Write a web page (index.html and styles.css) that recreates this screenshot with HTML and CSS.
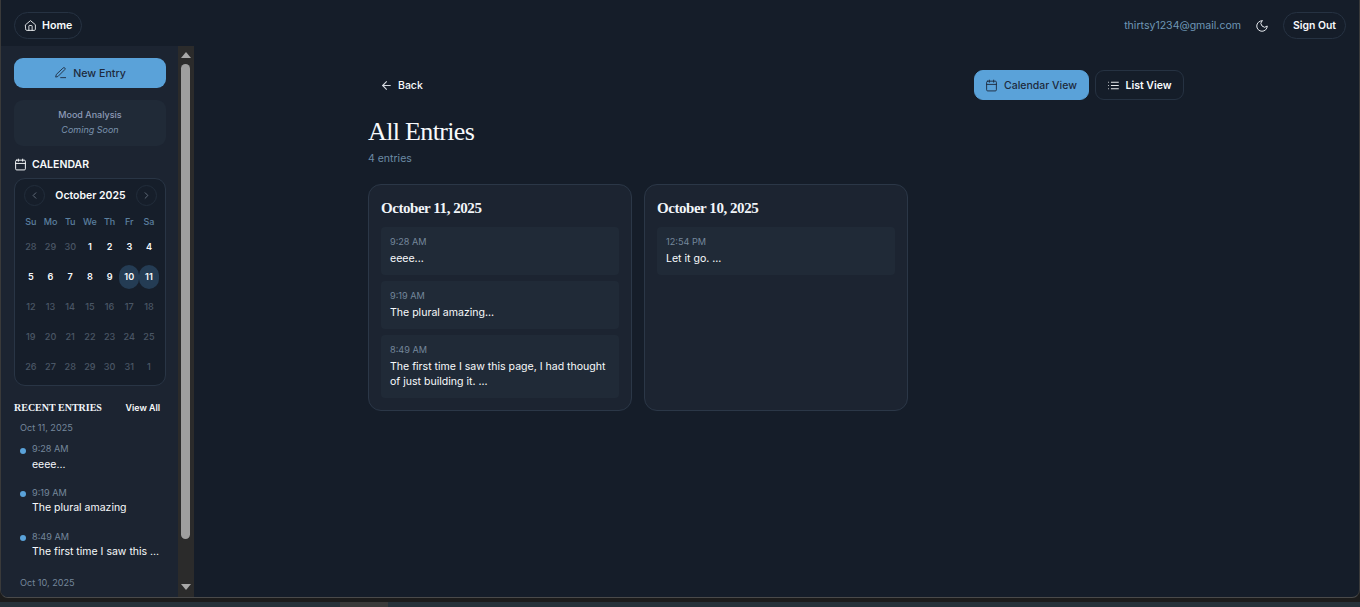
FILE: index.html
```html
<!DOCTYPE html>
<html lang="en">
<head>
<meta charset="utf-8">
<title>All Entries</title>
<link rel="stylesheet" href="styles.css">
</head>
<body>
<div class="desktop">
<div class="window">
  <header class="topbar">
    <a class="pill home"><svg class="ic" viewBox="0 0 24 24"><path d="M3 10.5 12 3l9 7.5V19a2 2 0 0 1-2 2H5a2 2 0 0 1-2-2z"/><path d="M9 21v-8a1 1 0 0 1 1-1h4a1 1 0 0 1 1 1v8"/></svg>Home</a>
    <div class="top-right">
      <span class="email">thirtsy1234@gmail.com</span>
      <svg class="ic moon" viewBox="0 0 24 24"><path d="M12 3a6 6 0 0 0 9 9 9 9 0 1 1-9-9z"/></svg>
      <a class="pill signout">Sign Out</a>
    </div>
  </header>
  <div class="body">
    <aside class="sidebar">
      <div class="side-content">
        <button class="new-entry"><svg class="ic" viewBox="0 0 24 24"><path d="M12 21h9"/><path d="M16.5 3.5a2.1 2.1 0 0 1 3 3L7 19l-4 1 1-4z"/></svg>New Entry</button>
        <div class="mood"><div class="mood-t">Mood Analysis</div><div class="mood-s">Coming Soon</div></div>
        <div class="cal-head"><svg class="ic" viewBox="0 0 24 24"><path d="M8 2v4M16 2v4"/><rect x="3" y="4" width="18" height="18" rx="2"/><path d="M3 10h18"/></svg>CALENDAR</div>
        <div class="cal">
          <div class="cal-nav">
            <span class="nav-btn"><svg class="ic" viewBox="0 0 24 24"><path d="m15 18-6-6 6-6"/></svg></span>
            <span class="month">October 2025</span>
            <span class="nav-btn"><svg class="ic" viewBox="0 0 24 24"><path d="m9 18 6-6-6-6"/></svg></span>
          </div>
          <div class="dow"><span>Su</span><span>Mo</span><span>Tu</span><span>We</span><span>Th</span><span>Fr</span><span>Sa</span></div>
          <div class="days">
            <span class="off">28</span><span class="off">29</span><span class="off">30</span><span class="on">1</span><span class="on">2</span><span class="on">3</span><span class="on">4</span>
            <span class="on">5</span><span class="on">6</span><span class="on">7</span><span class="on">8</span><span class="on">9</span><span class="on mark">10</span><span class="on mark">11</span>
            <span class="off">12</span><span class="off">13</span><span class="off">14</span><span class="off">15</span><span class="off">16</span><span class="off">17</span><span class="off">18</span>
            <span class="off">19</span><span class="off">20</span><span class="off">21</span><span class="off">22</span><span class="off">23</span><span class="off">24</span><span class="off">25</span>
            <span class="off">26</span><span class="off">27</span><span class="off">28</span><span class="off">29</span><span class="off">30</span><span class="off">31</span><span class="off">1</span>
          </div>
        </div>
        <div class="recent-head"><span class="recent-t">RECENT ENTRIES</span><span class="view-all">View All</span></div>
        <div class="recent-date">Oct 11, 2025</div>
        <div class="r-item first"><i class="dot"></i><div><div class="r-time">9:28 AM</div><div class="r-text">eeee...</div></div></div>
        <div class="r-item"><i class="dot"></i><div><div class="r-time">9:19 AM</div><div class="r-text">The plural amazing</div></div></div>
        <div class="r-item"><i class="dot"></i><div><div class="r-time">8:49 AM</div><div class="r-text">The first time I saw this ...</div></div></div>
        <div class="recent-date second">Oct 10, 2025</div>
      </div>
      <div class="scrollbar">
        <svg class="arrow" viewBox="0 0 10 6"><path d="M5 0 10 6H0z"/></svg>
        <div class="track"><div class="thumb"></div></div>
        <svg class="arrow" viewBox="0 0 10 6"><path d="M5 6 10 0H0z"/></svg>
      </div>
    </aside>
    <main class="main">
      <div class="inner">
        <div class="toolbar">
          <a class="back"><svg class="ic" viewBox="0 0 24 24"><path d="m12 19-7-7 7-7"/><path d="M19 12H5"/></svg>Back</a>
          <div class="views">
            <a class="view active"><svg class="ic" viewBox="0 0 24 24"><path d="M8 2v4M16 2v4"/><rect x="3" y="4" width="18" height="18" rx="2"/><path d="M3 10h18"/></svg>Calendar View</a>
            <a class="view"><svg class="ic" viewBox="0 0 24 24"><path d="M3 6h.01M3 12h.01M3 18h.01M8 6h13M8 12h13M8 18h13"/></svg>List View</a>
          </div>
        </div>
        <h1>All Entries</h1>
        <p class="count">4 entries</p>
        <div class="grid">
          <section class="card">
            <h2>October 11, 2025</h2>
            <div class="entry"><div class="e-time">9:28 AM</div><div class="e-text">eeee...</div></div>
            <div class="entry"><div class="e-time">9:19 AM</div><div class="e-text">The plural amazing...</div></div>
            <div class="entry"><div class="e-time">8:49 AM</div><div class="e-text">The first time I saw this page, I had thought of just building it. ...</div></div>
          </section>
          <section class="card">
            <h2>October 10, 2025</h2>
            <div class="entry"><div class="e-time">12:54 PM</div><div class="e-text">Let it go. ...</div></div>
          </section>
        </div>
      </div>
    </main>
  </div>
</div>
<div class="strip"><div class="strip-tab"></div></div>
</div>
</body>
</html>
```
FILE: styles.css
```css
* { box-sizing: border-box; }
html, body { margin: 0; height: 100%; overflow: hidden; }
body { font-family: Inter, "Liberation Sans", sans-serif; color: #f8fafc; background: #1c1c1c; }
a { color: inherit; text-decoration: none; }
.desktop { height: 607px; display: flex; flex-direction: column; background: #1c1c1c; }
.window { height: 598px; flex: none; display: flex; flex-direction: column; background: #151d29; border-left: 1px solid #3a3a3a; border-bottom: 1px solid #4a4a4a; border-right: 1px solid #3a3a3a; border-radius: 0 0 8px 8px; overflow: hidden; }
.strip { height: 9px; padding: 4px 0 0 340px; background: linear-gradient(#1c1c1c 0 4px, #26323a 4px); }
.strip-tab { width: 48px; height: 5px; background: #3a3a3a; }
.ic { width: 14px; height: 14px; fill: none; stroke: currentColor; stroke-width: 2; stroke-linecap: round; stroke-linejoin: round; flex: none; }
.topbar { height: 46px; flex: none; padding: 12px 13px 0 13px; display: flex; justify-content: space-between; align-items: flex-start; }
.pill { height: 27px; display: inline-flex; align-items: center; gap: 5.5px; border: 1px solid #263242; border-radius: 13.5px; font-size: 10.66px; font-weight: 600; }
.home { padding: 0 8.5px; width: 68px; }
.home .ic { width: 13px; height: 13px; stroke-width: 1.6; }
.top-right { display: flex; align-items: center; height: 27px; }
.email { font-size: 10.55px; color: #6f97b6; margin-right: 14px; }
.moon { color: #e5e9ee; margin-right: 14px; stroke-width: 1.7; }
.signout { width: 63px; justify-content: center; font-size: 10.4px; }
.body { flex: 1; display: flex; min-height: 0; }
.sidebar { width: 193px; flex: none; display: flex; background: #1c2431; }
.side-content { width: 177px; flex: none; padding: 12px 12px 0 13px; overflow: hidden; }
.new-entry { width: 152px; height: 30px; display: flex; align-items: center; justify-content: center; gap: 5.7px; border: 0; border-radius: 9px; background: #5aa2d9; color: #1d2a3d; font: 500 10.66px Inter, sans-serif; }
.new-entry .ic { width: 13.3px; height: 13.3px; stroke-width: 1.6; }
.mood { margin-top: 12px; height: 46px; border-radius: 9px; background: #202a37; text-align: center; padding-top: 7px; font-size: 9px; line-height: 15px; }
.mood-t { color: #8d9bb8; font-weight: 500; }
.mood-s { color: #7b93ad; font-style: italic; }
.cal-head { margin-top: 10px; height: 16px; display: flex; align-items: center; gap: 5px; font-size: 10.5px; font-weight: 600; }
.cal-head .ic { width: 13px; height: 13px; margin-left: 0; stroke-width: 1.8; }
.cal { margin-top: 6px; width: 152px; height: 208px; padding: 6px 5px 0 6px; background: #161e2a; border: 1px solid #293545; border-radius: 11px; }
.cal-nav { display: flex; align-items: center; justify-content: space-between; padding: 0 3px; height: 21px; }
.nav-btn { width: 21px; height: 21px; border-radius: 50%; border: 1px solid #222d3b; display: flex; align-items: center; justify-content: center; color: #66717f; }
.nav-btn .ic { width: 11px; height: 11px; }
.month { font-size: 10.5px; font-weight: 600; }
.dow { display: grid; grid-template-columns: repeat(7, 19.7px); margin-top: 10px; height: 12px; font-size: 9px; line-height: 12px; text-align: center; color: #5c80a0; font-weight: 500; }
.days { display: grid; grid-template-columns: repeat(7, 19.7px); grid-auto-rows: 24px; row-gap: 6px; margin-top: 7px; text-align: center; font-size: 9.14px; font-weight: 500; }
.days span { line-height: 24px; }
.days .off { color: #4a5665; }
.days .on { color: #f8fafc; font-weight: 600; }
.days .mark { background: #243c54; border-radius: 10px; }
.recent-head { margin-top: 14px; display: flex; justify-content: space-between; align-items: center; height: 14px; padding-right: 6px; }
.recent-t { font: 700 10px "Liberation Serif", serif; color: #f1f5f9; }
.view-all { font-size: 8.8px; font-weight: 600; }
.recent-date { margin: 7.5px 0 0 6px; height: 12px; line-height: 12px; font-size: 9.14px; color: #74879b; }
.recent-date.second { margin-top: 11px; }
.r-item { margin: 8.75px 0 0 6px; display: flex; gap: 6px; height: 35px; }
.r-item.first { margin-top: 9.5px; }
.dot { width: 6px; height: 6px; margin-top: 4.7px; border-radius: 50%; background: #5aa2d9; flex: none; }
.r-time { font-size: 9.14px; line-height: 12px; color: #74879b; }
.r-text { margin-top: 1.5px; font-size: 10.5px; line-height: 15px; color: #f8fafc; white-space: nowrap; }
.scrollbar { width: 16px; flex: none; background: #2b2b2b; display: flex; flex-direction: column; align-items: center; padding: 6px 1px 7px 0; gap: 6px; }
.arrow { width: 10px; height: 6px; fill: #a8a8a8; flex: none; }
.track { flex: 1; width: 9px; }
.thumb { height: 475px; border-radius: 5px; background: #9e9e9e; }
.main { flex: 1; min-width: 0; padding: 24px 176px 0 174px; }
.inner { width: 816px; }
.toolbar { height: 30px; display: flex; justify-content: space-between; align-items: center; }
.back { display: flex; align-items: center; gap: 5.5px; padding-left: 11.5px; font-size: 10.5px; font-weight: 500; }
.back .ic { width: 13px; height: 13px; color: #d4d9df; }
.views { display: flex; gap: 6px; }
.view { width: 89px; height: 30px; display: flex; align-items: center; gap: 5.5px; padding: 0 0 0 11px; border: 1px solid #263242; border-radius: 9px; font-size: 10.5px; font-weight: 600; white-space: nowrap; }
.view .ic { width: 13px; height: 13px; stroke-width: 1.7; }
.view.active { width: 115px; background: #5aa2d9; border-color: #5aa2d9; color: #1d2a3d; font-weight: 500; gap: 6px; padding-left: 10px; }
h1 { margin: 17px 0 0; height: 30px; font: 400 26px/30px "Liberation Serif", serif; letter-spacing: -0.65px; color: #f8fafc; }
.count { margin: 5px 0 0; font-size: 10.5px; line-height: 14px; color: #6c8ba5; }
.grid { margin-top: 18px; display: grid; grid-template-columns: 264px 264px; gap: 12px; align-items: stretch; }
.card { padding: 12px; background: #1c2431; border: 1px solid #2b3747; border-radius: 13px; }
h2 { margin: 0 0 8px; font: 700 15px/22px "Liberation Serif", serif; letter-spacing: -0.45px; color: #f1f5f9; }
.entry { background: #202a37; border-radius: 4px; padding: 8.5px 9px 9.5px; margin-top: 6px; }
h2 + .entry { margin-top: 0; }
.e-time { font-size: 9.14px; line-height: 12px; color: #74879b; }
.e-text { margin-top: 3px; font-size: 10.55px; line-height: 15px; color: #f8fafc; }
```
